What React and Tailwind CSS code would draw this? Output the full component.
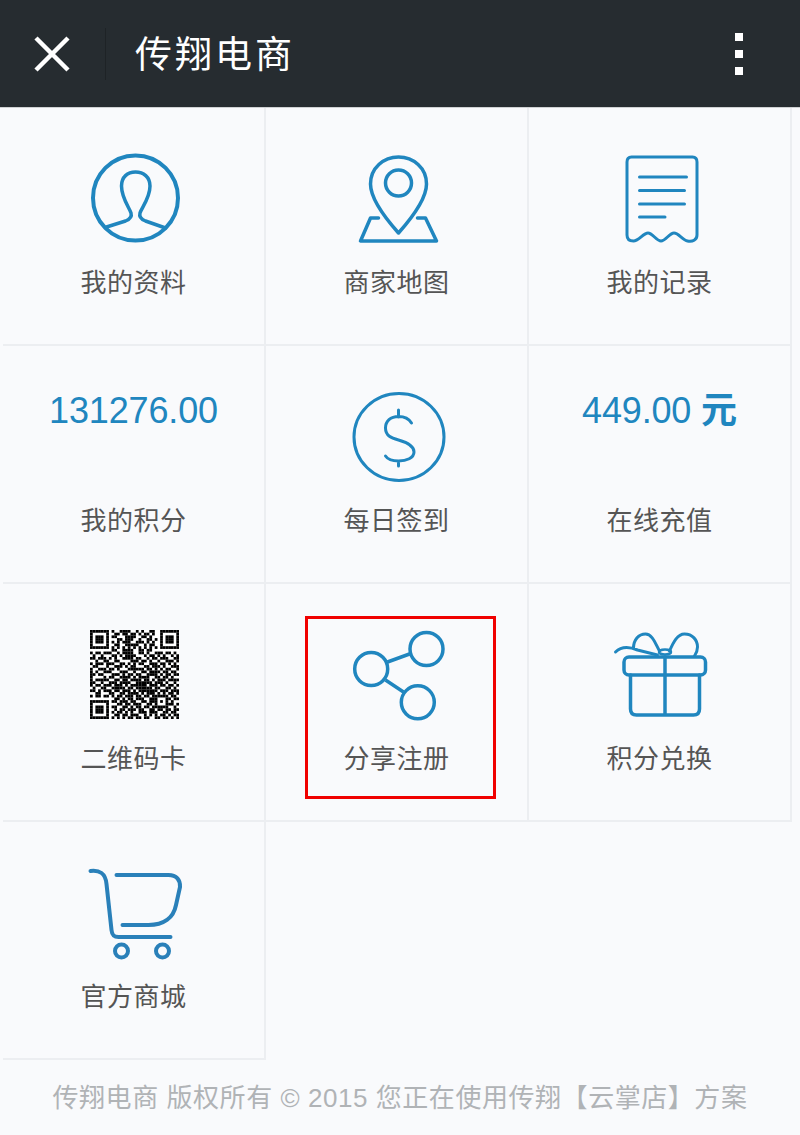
import { Fragment } from 'react';

const QR_ROWS = [
  '1111111 0 10011110010100110 0 1111111',
  '1000001 0 01101101101011010 0 1000001',
  '1011101 0 11000111100110100 0 1011101',
  '1011101 0 00110111001001101 0 1011101',
  '1011101 0 10101110011101010 0 1011101',
  '1000001 0 01100111110010110 0 1000001',
  '1111111 0 10101010101010101 0 1111111',
  '0000000 0 11001111001101100 0 0000000',
  '101101110010111100110100111011010',
  '010010001101011110001011010100101',
  '110111010100111101100101101110011',
  '001001100110000111011010010011101',
  '101110111001101010110011101101010',
  '011000100111010110001101110100111',
  '100111011010001111110110101011001',
  '101001110001110010011011110110110',
  '110110001110101101100111101011011',
  '100001011001111010111100110110100',
  '101111100110110111101101011101111',
  '110010011101111001111110111010010',
  '101101110111010111111011101101101',
  '010011001111101101111110110011010',
  '110101110110111010111111101110111',
  '001100011001101111010111010101101',
  '10110110 1011011101101101 11111 0110',
  '00000000 0110101101110011 10001 1011',
  '11111110 1101110110011011 10101 0100',
  '10000010 0011011011100110 10001 1101',
  '10111010 1100110101101101 11111 0010',
  '10111010 0101101110110011 011011011',
  '10111010 1011010100111011 100110110',
  '10000010 0110110111001010 101101011',
  '11111110 1010101101101100 110110101',
].map((r) => r.replace(/ /g, ''));

// icons use page coordinates in the viewBox, traced from the screenshot
const Icon = ({ box, children, strokeWidth = 3.5, color = '#2086bf' }) => (
  <svg
    viewBox={box}
    width="100"
    height="90"
    fill="none"
    stroke={color}
    strokeWidth={strokeWidth}
    strokeLinecap="round"
    strokeLinejoin="round"
    className="block overflow-visible"
  >
    {children}
  </svg>
);

const ProfileIcon = () => (
  <Icon box="83.5 153 100 90" strokeWidth={4}>
    <circle cx="135" cy="198" r="42.5" />
    <path strokeWidth="3.5" d="M106 227 L125 221 C130 219 131.5 216.5 130.5 213 C129 208 121 198 121 186 C121 177 127 172 135 172 C143 172 149.5 177 149.5 186 C149.5 198 141 208 139.5 213 C138.5 216.5 140 219 145 221 L165 228" />
  </Icon>
);

const MapIcon = () => (
  <Icon box="346.5 153 100 90">
    <path d="M398 233 C390 224 370 200 370 184 C370 168 383 157 398 157 C413 157 426 168 426 184 C426 200 406 224 398 233 Z" />
    <circle cx="398" cy="183" r="13" />
    <path d="M378 218 L370 218 L360 241 L436 241 L425 218 L417 218" />
  </Icon>
);

const ReceiptIcon = () => (
  <Icon box="609.5 153 100 90" strokeWidth={3}>
    <path d="M631 157 L692 157 C695 157 696.5 159 696.5 162 L696.5 235 C696.5 240 692 242 687 241 C682 240 678 233 673.5 233 C669 233 665 241 660.5 241 C656 241 652 233 647.5 233 C643 233 638 241 633 241 C629 241 626.5 239 626.5 235 L626.5 162 C626.5 159 628 157 631 157 Z" />
    <path d="M639 177 L686 177 M639 190.5 L684 190.5 M639 204 L684 204 M639 217 L664.5 217" />
  </Icon>
);

const DollarIcon = () => (
  <Icon box="346.5 391 100 90" strokeWidth={3}>
    <ellipse cx="398.5" cy="437" rx="45" ry="43.5" />
    <path d="M398 410 L398 417 M398 461 L398 466 M411 423 C408 418 403 416.5 398 416.5 C390 416.5 385 421 385 428 C385 436 391 438 398 440 C405 442 413.5 445 413.5 452 C413.5 458 406 461 398 461 C392 461 387 459 385 456" />
  </Icon>
);

const QrCode = () => (
  <svg viewBox="0 0 33 33" width="89" height="89" className="block bg-white mt-px ml-[2px]">
    {QR_ROWS.map((row, y) => (
      <Fragment key={y}>
        {row.split('').map((v, x) => (v === '1' ? <rect key={x} x={x} y={y} width="1.02" height="1.02" fill="#000" /> : null))}
      </Fragment>
    ))}
  </svg>
);

const ShareIcon = () => (
  <Icon box="346.5 629 100 90">
    <circle cx="370.7" cy="669" r="16.5" />
    <circle cx="426" cy="649" r="16.5" />
    <circle cx="417.3" cy="702.3" r="16.5" />
    <path d="M387 662 L409 654 M385 680 L403 692" strokeLinecap="butt" />
  </Icon>
);

const GiftIcon = () => (
  <Icon box="609.5 629 100 90" strokeWidth={3.5}>
    <rect x="623.5" y="657" width="81.5" height="18" rx="5" />
    <path d="M630 675 L630 709 C630 713 632 715 636 715 L693 715 C697 715 699 713 699 709 L699 675 M664.5 657 L664.5 715" />
    <path strokeWidth="3" d="M615 652 C621 646 630 647 637 650 L657 655 M633 648 C633 640 638 634 645 634 C652 634 655 644 659 651 M669 651 C673 642 677 634 684 634 C692 634 697 640 697 647 C697 650 696 653 694 656" />
    <ellipse strokeWidth="2.5" cx="664.5" cy="652" rx="6" ry="2.5" />
  </Icon>
);

const CartIcon = () => (
  <Icon box="83.5 867 100 90" strokeWidth={4} color="#2a80b9">
    <path d="M90 871 C99 870 105 873 106 884 L111 930 C111.500 935 113 937 118 937 L170 937" />
    <path d="M116 875 L168 875 C176 875 180 880 179.500 887 L175.500 905 C173 918 163 925 148 925 L122 925" />
    <circle cx="121" cy="951" r="6.5" />
    <circle cx="162" cy="951" r="6.5" />
  </Icon>
);

const Value = ({ children }) => (
  <div className="h-[90px] w-full pt-px text-center text-[#2086bf] text-[36px] leading-[38px] tracking-[-0.15px] whitespace-nowrap font-['Liberation_Sans','Noto_Sans_CJK_SC',sans-serif]">
    {children}
  </div>
);

const items = [
  { label: '我的资料', icon: <ProfileIcon /> },
  { label: '商家地图', icon: <MapIcon /> },
  { label: '我的记录', icon: <ReceiptIcon /> },
  { label: '我的积分', icon: <Value>131276.00</Value> },
  { label: '每日签到', icon: <DollarIcon /> },
  { label: '在线充值', icon: <Value>449.00 <span className="font-bold">元</span></Value> },
  { label: '二维码卡', icon: <QrCode /> },
  { label: '分享注册', icon: <ShareIcon />, marked: true },
  { label: '积分兑换', icon: <GiftIcon /> },
  { label: '官方商城', icon: <CartIcon /> },
];

const GridCell = ({ item }) => (
  <div className="relative h-[238px] flex flex-col items-center pt-[45px] border-r-2 border-b-2 border-[#eceef1]">
    <div className="h-[90px] w-full flex justify-center">{item.icon}</div>
    <div className="mt-[18px] text-[26px] leading-[40px] text-[#555555] tracking-[0.5px]">{item.label}</div>
    {item.marked && <div className="absolute left-[39px] top-[32px] w-[191px] h-[183px] border-[3px] border-[#f00000]" />}
  </div>
);

export default function App() {
  return (
    <div className="w-[800px] h-[1135px] bg-[#f9fafc] overflow-hidden font-['Noto_Sans_CJK_SC','Liberation_Sans',sans-serif]">
      <header className="h-[108px] flex items-center bg-[#262c30] border-b border-[#cfd1d3]">
        <svg width="40" height="40" viewBox="0 0 40 40" fill="none" stroke="#fff" strokeWidth="4.5" className="ml-[32px]">
          <path d="M4 4 L36 36 M36 4 L4 36" />
        </svg>
        <div className="ml-[33px] w-px h-[52px] bg-[#1e2326]" />
        <h1 className="ml-[29px] -mt-[4px] text-[37px] leading-[44px] tracking-[3px] font-normal text-white">传翔电商</h1>
        <div className="ml-auto mr-[57px] flex flex-col gap-[9px]">
          <span className="block w-2 h-2 bg-white" />
          <span className="block w-2 h-2 bg-white" />
          <span className="block w-2 h-2 bg-white" />
        </div>
      </header>

      <div className="ml-[3px] w-[789px] grid grid-cols-3">
        {items.map((item) => (
          <GridCell key={item.label} item={item} />
        ))}
      </div>

      <footer className="h-[75px] pt-[2px] flex items-center justify-center text-[26px] tracking-[0.55px] text-[#b0b3b6] whitespace-nowrap font-['Liberation_Sans','Noto_Sans_CJK_SC',sans-serif]">
        传翔电商 版权所有 © 2015 您正在使用传翔【云掌店】方案
      </footer>
    </div>
  );
}
